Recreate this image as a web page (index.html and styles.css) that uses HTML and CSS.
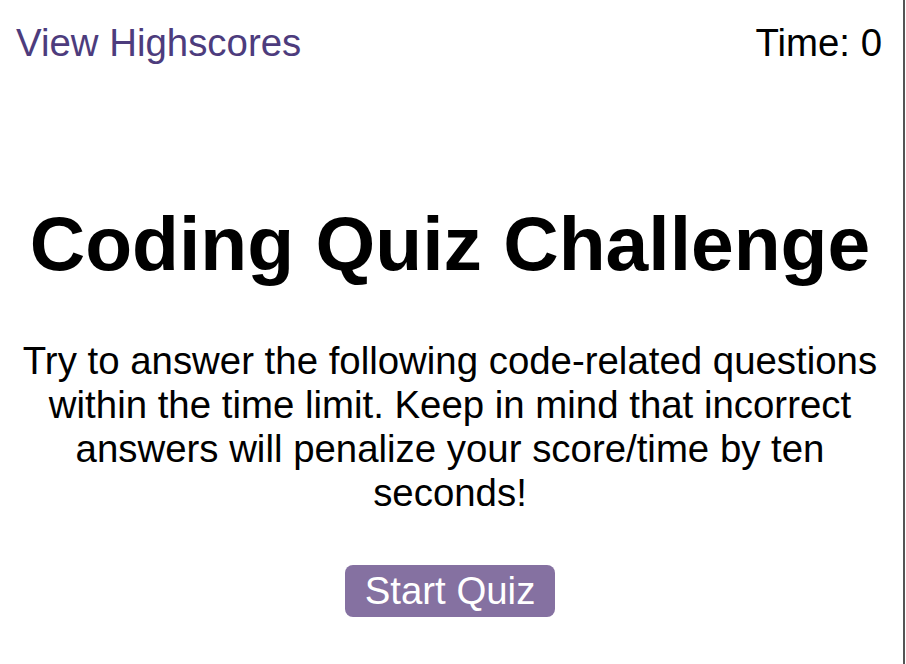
FILE: index.html
```html
<!DOCTYPE html>
<html lang="en">
<head>
<meta charset="utf-8">
<title>Coding Quiz Challenge</title>
<link rel="stylesheet" href="styles.css">
</head>
<body>
<div class="page">
  <header class="topbar">
    <a class="highscores" href="#">View Highscores</a>
    <div class="timer">Time: <span>0</span></div>
  </header>
  <main class="intro">
    <h1 class="title">Coding Quiz Challenge</h1>
    <p class="lead">Try to answer the following code-related questions within the time limit. Keep in mind that incorrect answers will penalize your score/time by ten seconds!</p>
    <button class="start" type="button">Start Quiz</button>
  </main>
</div>
</body>
</html>
```
FILE: styles.css
```css
html, body {
  margin: 0;
  padding: 0;
  background: #ffffff;
}

body {
  font-family: "Liberation Sans", Arial, Helvetica, sans-serif;
  font-size: 38.4px;
  color: #000000;
}

.page {
  width: 903px;
  min-height: 664px;
  border-right: 2px solid #555555;
  display: flex;
  flex-direction: column;
}

.topbar {
  display: flex;
  justify-content: space-between;
  align-items: baseline;
  padding: 21px 21px 0 16px;
}

.highscores {
  color: #4d3c7d;
  text-decoration: none;
}

.timer {
  color: #000000;
}

.intro {
  width: 900px;
  display: flex;
  flex-direction: column;
  align-items: center;
  text-align: center;
}

.title {
  font-size: 76.8px;
  font-weight: bold;
  margin: 134px 0 0;
}

.lead {
  width: 880px;
  margin: 51px 0 0;
}

.start {
  font-family: inherit;
  font-size: 38.4px;
  color: #ffffff;
  background: #8571a1;
  border: none;
  border-radius: 8px;
  padding: 4px 20px;
  margin-top: 50px;
  cursor: pointer;
}
```
